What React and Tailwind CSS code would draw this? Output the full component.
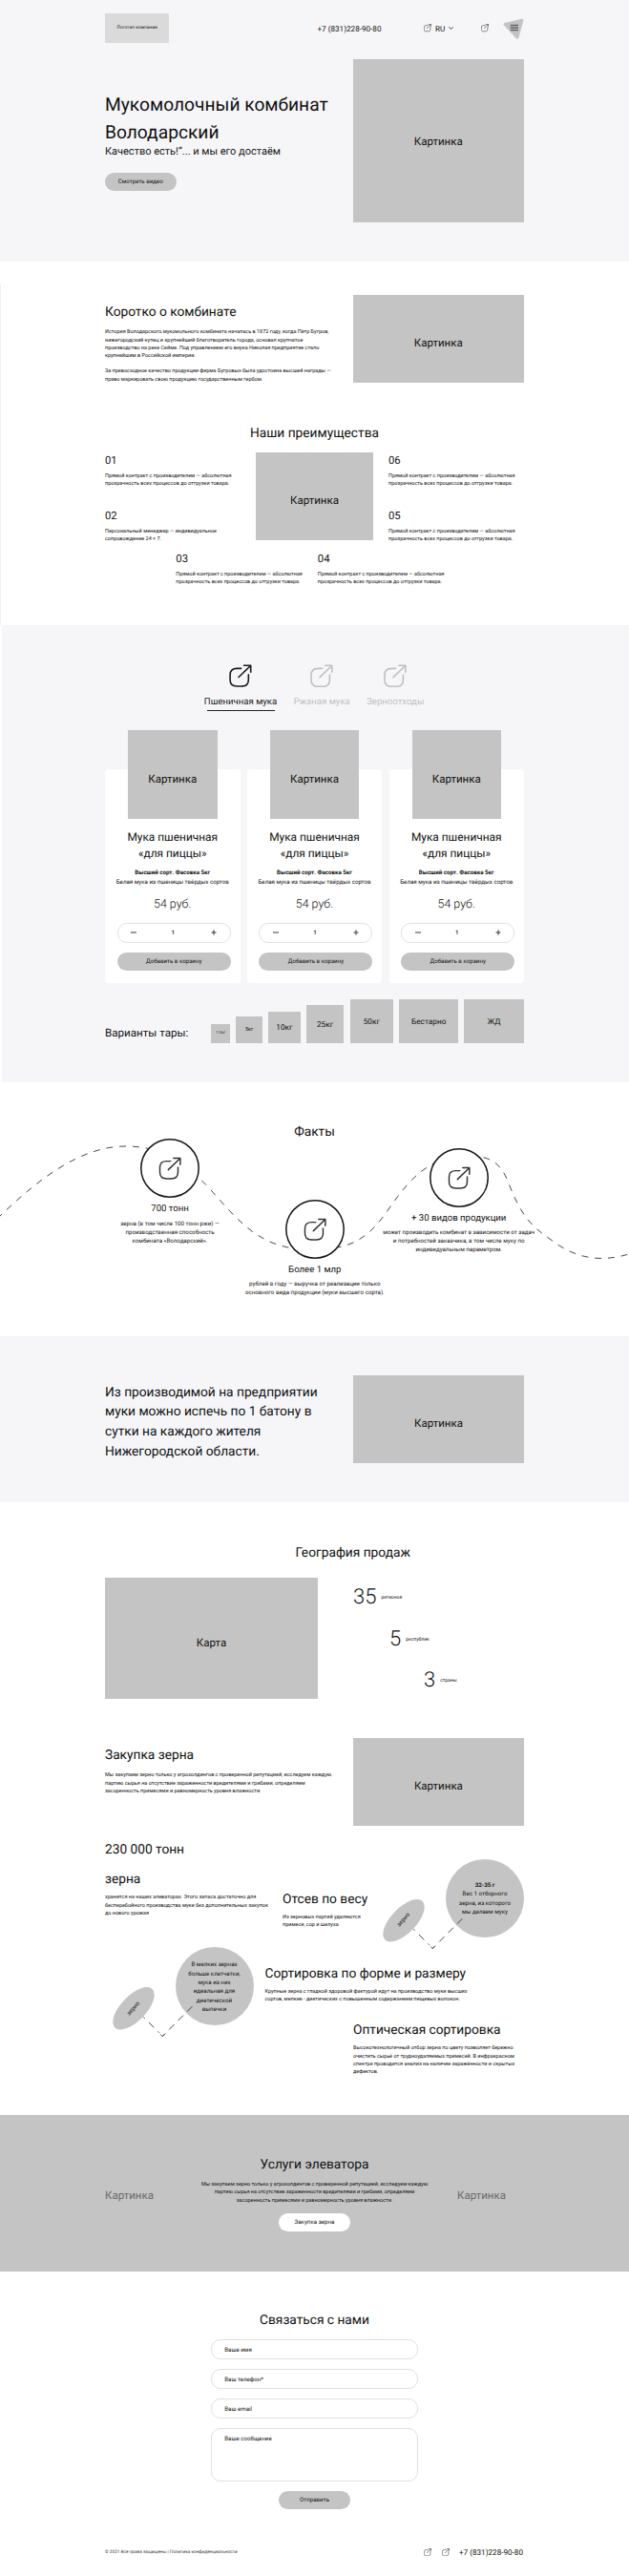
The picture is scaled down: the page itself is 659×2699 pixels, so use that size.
import React from "react";

function LinkIcon({ className, stroke = 1.5 }) {
  return (
    <svg viewBox="0 0 24 24" className={className} fill="none" stroke="currentColor" strokeWidth={stroke} strokeLinecap="round" strokeLinejoin="round">
      <path d="M12.6 4.4H8.2C3 4.4 1 6.4 1 11.2v5.2c0 4.8 2 6.8 7.200 6.800h5c5.200 0 7.200-2 7.200-6.800v-5.400" />
      <path d="M10 13.600 22.600 1.500M15.600 1.300h7.200v6.900" />
    </svg>
  );
}

function Picture({ className, children = "Картинка", shift = true }) {
  return (
    <div className={`flex shrink-0 items-center justify-center bg-[#c4c4c4] ${className}`}>
      <span className={`text-[11.5px] leading-4 ${shift ? "pt-[8.500px]" : ""}`}>{children}</span>
    </div>
  );
}

function Lines({ items, className = "" }) {
  return (
    <div className={className}>
      {items.map((line, i) => (
        <p key={i}>{line}</p>
      ))}
    </div>
  );
}

const body = "text-[5.49px] leading-[8.24px]";
const h2 = "text-[13.73px] leading-5";
const direct = ["Прямой контракт с производителем — абсолютная", "прозрачность всех процессов до отгрузки товара."];
const purchase = [
  "Мы закупаем зерно только у агрохолдингов с проверенной репутацией, исследуем каждую",
  "партию сырья на отсутствие зараженности вредителями и грибами, определяем",
  "засоренность примесями и равномерность уровня влажности.",
];

function Advantage({ n, items, className = "" }) {
  return (
    <div className={className}>
      <p className="text-[11.300px] leading-[14px]">{n}</p>
      <Lines items={items} className={`mt-[5px] ${body}`} />
    </div>
  );
}

function Hero() {
  return (
    <section className="h-[274px] shrink-0 bg-[#f6f6f9] px-[110px] pt-[14px]">
      <header className="flex h-[31px] items-center">
        <div className="flex h-[31px] w-[67px] items-center justify-center bg-[#dadada] text-[4.800px]">Логотип компании</div>
        <span className="ml-[155.500px] w-[111.500px] pt-[1px] text-[8.150px]">+7 (831)228-90-80</span>
        <LinkIcon className="h-[8.300px] w-[8px]" />
        <span className="ml-[4px] w-[13.500px] pt-[1px] text-[8.150px]">RU</span>
        <svg viewBox="0 0 5 3" className="h-[3px] w-[5px]" fill="none" stroke="#222" strokeWidth="0.9">
          <path d="M.4.4 2.500 2.400 4.600.4" />
        </svg>
        <LinkIcon className="ml-[29px] h-[8.300px] w-[8px]" />
        <svg viewBox="0 0 22 22" className="ml-[15.500px] h-[22px] w-[22px] shrink-0">
          <path d="M2 6.500 20 2.200 15 20.200Z" fill="#c4c4c4" stroke="#c4c4c4" strokeWidth="3" strokeLinejoin="round" />
          <path d="M7.700 7.500h8.300M7.700 10h8.300M7.700 12.500h8.300" stroke="#666" strokeWidth="1.500" />
        </svg>
      </header>
      <div className="mt-[17px] flex">
        <div className="w-[259.500px] pt-[34px]">
          <Lines items={["Мукомолочный комбинат", "Володарский"]} className="text-[19.200px] leading-[28.800px]" />
          <p className="-mt-[3px] text-[11px] leading-4">Качество есть!”... и мы его достаём</p>
          <div className="mt-[14.500px] flex h-[18.700px] w-[74.500px] items-center justify-center rounded-full bg-[#c4c4c4] text-[6.180px]">Смотреть видео</div>
        </div>
        <Picture shift={false} className="h-[171px] w-[179.500px]" />
      </div>
    </section>
  );
}

function About() {
  return (
    <section className="h-[381px] shrink-0 pt-[24px]">
      <div className="h-[357px] border-l border-[#f0f0f0] pr-[110px] pl-[109px] pt-[10.500px]">
        <div className="flex h-[92.500px]">
          <div className="w-[259.500px] pt-[8.800px]">
            <h2 className={h2}>Коротко о комбинате</h2>
            <Lines
              className={`mt-[7px] ${body}`}
              items={[
                "История Володарского мукомольного комбината началась в 1872 году, когда Пётр Бугров,",
                "нижегородский купец и крупнейший благотворитель города, основал крупчатое",
                "производство на реке Сейме. Под управлением его внука Николая предприятие стало",
                "крупнейшим в Российской империи.",
              ]}
            />
            <Lines
              className={`mt-[8.240px] ${body}`}
              items={["За превосходное качество продукции фирма Бугровых была удостоена высшей награды —", "право маркировать свою продукцию государственным гербом."]}
            />
          </div>
          <Picture className="h-[92.500px] w-[179.500px]" />
        </div>
        <h2 className={`mt-[43px] text-center ${h2}`}>Наши преимущества</h2>
        <div className="mt-[10px] flex h-[92px]">
          <div className="w-[158px] pt-[1.800px]">
            <Advantage n="01" items={direct} />
            <Advantage n="02" items={["Персональный менеджер — индивидуальное", "сопровождение 24 × 7."]} className="mt-[22.500px]" />
          </div>
          <Picture className="h-[92px] w-[123px]" />
          <div className="pt-[1.800px] pl-[16px]">
            <Advantage n="06" items={direct} />
            <Advantage n="05" items={direct} className="mt-[22.500px]" />
          </div>
        </div>
        <div className="mt-[13px] flex pl-[74.300px]">
          <Advantage n="03" items={direct} className="w-[148.500px]" />
          <Advantage n="04" items={direct} />
        </div>
      </div>
    </section>
  );
}

function Card() {
  return (
    <div className="flex h-[224px] w-[141.500px] flex-col items-center rounded-[4px] bg-white">
      <Picture className="-mt-[41px] h-[93px] w-[93.500px]" />
      <Lines items={["Мука пшеничная", "«для пиццы»"]} className="mt-[10.500px] text-center text-[11.900px] leading-[17.800px]" />
      <div className="mt-[6.400px] text-center text-[6.180px] leading-[9.300px]">
        <p className="font-bold">Высший сорт. Фасовка 5кг</p>
        <p>Белая мука из пшеницы твёрдых сортов</p>
      </div>
      <p className="mt-[10.800px] text-[12.400px] font-light leading-4">54 руб.</p>
      <div className="mt-[11px] ml-[12.700px] flex h-[20.700px] w-[119px] items-center justify-between self-start rounded-[10px] border border-[#e2e2e2] px-[13.500px] text-[6.180px]">
        <svg viewBox="0 0 6 6" className="h-[6px] w-[6px]"><path d="M0 3h6" stroke="#222" strokeWidth=".9" /></svg>
        <span className="pr-[2px] font-medium">1</span>
        <svg viewBox="0 0 6 6" className="h-[6px] w-[6px]"><path d="M.5 3h5M3 .3v5.400" stroke="#222" strokeWidth=".9" /></svg>
      </div>
      <div className="mt-[10.300px] ml-[12.700px] flex h-[18.700px] w-[119px] items-center justify-center self-start rounded-full bg-[#c4c4c4] text-[6.180px]">Добавить в корзину</div>
    </div>
  );
}

function Products() {
  return (
    <section className="h-[479px] shrink-0 bg-white pl-[2px]">
      <div className="h-full bg-[#f6f6f9] pr-[110px] pl-[108px] pt-[41px]">
        <div className="flex h-[48.500px] gap-[18px] pl-[104px] text-[9.600px] leading-3 text-[#c0c0c0]">
          <div className="flex w-[76px] flex-col items-center whitespace-nowrap text-[#1a1a1a]">
            <LinkIcon className="h-6 w-6" stroke={1.6} />
            <span className="mt-[10.200px]">Пшеничная мука</span>
            <span className="mt-[1.500px] h-px w-[71px] bg-[#222]" />
          </div>
          <div className="flex w-[58.500px] flex-col items-center whitespace-nowrap">
            <LinkIcon className="h-6 w-6" stroke={1.6} />
            <span className="mt-[10.200px]">Ржаная мука</span>
          </div>
          <div className="flex w-[59.500px] flex-col items-center whitespace-nowrap">
            <LinkIcon className="h-6 w-6" stroke={1.6} />
            <span className="mt-[10.200px]">Зерноотходы</span>
          </div>
        </div>
        <div className="mt-[61.500px] flex justify-between">
          <Card />
          <Card />
          <Card />
        </div>
        <div className="mt-[17.300px] flex h-[45.300px] items-end justify-between text-[8.240px]">
          <span className="mb-[2.600px] w-[105px] text-[11.600px] leading-4">Варианты тары:</span>
          <div className="flex h-5 w-5 items-center justify-center bg-[#c4c4c4] pt-px text-[4.100px]">1-2кг</div>
          <div className="flex h-[27.500px] w-[27.500px] items-center justify-center bg-[#c4c4c4] pt-px text-[5.490px]">5кг</div>
          <div className="flex h-[33px] w-[33.500px] items-center justify-center bg-[#c4c4c4] pt-[1.500px]">10кг</div>
          <div className="flex h-[39.300px] w-[39.500px] items-center justify-center bg-[#c4c4c4] pt-[1.500px]">25кг</div>
          <div className="flex h-[45.300px] w-[45.500px] items-center justify-center bg-[#c4c4c4] pt-[1.500px]">50кг</div>
          <div className="flex h-[45.300px] w-[62px] items-center justify-center bg-[#c4c4c4] pt-[1.500px]">Бестарно</div>
          <div className="flex h-[45.300px] w-[62.500px] items-center justify-center bg-[#c4c4c4] pt-[1.500px]">ЖД</div>
        </div>
      </div>
    </section>
  );
}

function Fact({ className, title, items }) {
  return (
    <div className={`absolute flex w-[180px] flex-col items-center text-center ${className}`}>
      <svg viewBox="0 0 62 62" className="h-[62px] w-[62px] text-[#333]">
        <circle cx="31" cy="31" r="30.200" fill="#fff" stroke="#161616" strokeWidth="1.500" />
        <LinkIconPaths />
      </svg>
      <p className="mt-[6px] text-[9.600px] leading-3">{title}</p>
      <Lines items={items} className="mt-[4.200px] text-[6.180px] leading-[9.300px]" />
    </div>
  );
}

function LinkIconPaths() {
  return (
    <g transform="translate(19.500 19.300) scale(.98)" fill="none" stroke="currentColor" strokeWidth="1.500" strokeLinecap="round" strokeLinejoin="round">
      <path d="M12.600 4.400H8.200C3 4.400 1 6.400 1 11.200v5.200c0 4.800 2 6.800 7.200 6.800h5c5.200 0 7.200-2 7.200-6.800v-5.400" />
      <path d="M10 13.600 22.600 1.500M15.600 1.300h7.200v6.900" />
    </g>
  );
}

function Facts() {
  return (
    <section className="relative h-[266px] shrink-0 pt-[41.500px]">
      <h2 className={`text-center ${h2}`}>Факты</h2>
      <svg viewBox="0 0 659 266" className="absolute inset-0 h-[266px] w-[659px]" fill="none" stroke="#333" strokeWidth="0.9" strokeDasharray="6.900 6.900">
        <path d="M-3 143C38 103 84 67 131 67C166 67 190 79 222 114C252 148 275 175 323 175C364 176 384 167 407 133C428 103 448 78 488 77C512 77 524 82 533 106C545 137 555 150 576 164C604 186 631 189 662 179" />
      </svg>
      <Fact className="top-[59.400px] left-[88px]" title="700 тонн" items={["зерна (в том числе 100 тонн ржи) —", "производственная способность", "комбината «Володарский»."]} />
      <Fact className="top-[122.600px] left-[239.800px]" title="Более 1 млр" items={["рублей в году — выручка от реализации только", "основного вида продукции (муки высшего сорта)."]} />
      <Fact className="top-[68.500px] left-[390.700px]" title="+ 30 видов продукции" items={["может производить комбинат в зависимости от задач", "и потребностей заказчика, в том числе муку по", "индивидуальным параметром."]} />
    </section>
  );
}

function Grain({ className = "", children }) {
  return (
    <div className={`relative h-[96px] w-[148px] shrink-0 ${className}`}>
      <svg viewBox="0 0 148 96" className="absolute inset-0 h-[96px] w-[148px]">
        <circle cx="107" cy="41" r="41" fill="#c4c4c4" />
        <ellipse cx="22" cy="64.300" rx="28.100" ry="13.200" transform="rotate(-46 22 64.300)" fill="#c4c4c4" />
        <g fill="none" stroke="#333" strokeWidth="0.9">
          <path d="M83.300 62.300 52.300 93.400" strokeDasharray="7.500 5.800" />
          <path d="M32.300 73.300 52.300 93.400" strokeDasharray="2 6 7.500 5.800" />
          <path d="M50.300 91.800 52.300 93.600 54.300 91.800" />
        </g>
      </svg>
      <div className="absolute top-0 left-[66px] flex h-[84px] w-[82px] flex-col items-center justify-center text-center text-[6.180px] leading-[9.300px]">{children}</div>
      <span className="absolute top-[59.600px] left-[12px] w-[20px] -rotate-50 text-center text-[6.180px] leading-[9.300px]">зерно</span>
    </div>
  );
}

function Stat({ value, label, className }) {
  return (
    <div className={`flex h-6 items-center ${className}`}>
      <span className="text-[22px] font-light leading-6">{value}</span>
      <span className="ml-[5px] text-[5px] leading-6">{label}</span>
    </div>
  );
}

function Sales() {
  return (
    <section className="h-[641.500px] shrink-0 px-[110px] pt-[42.500px]">
      <h2 className={`pl-[199.500px] ${h2}`}>География продаж</h2>
      <div className="mt-[16.300px] flex h-[127px]">
        <Picture className="h-[127px] w-[223px]">Карта</Picture>
        <div className="pl-[37px] pt-[9.600px]">
          <Stat value="35" label="регионов" className="" />
          <Stat value="5" label="республик" className="mt-[19.200px] pl-[38px]" />
          <Stat value="3" label="страны" className="mt-[19.200px] pl-[74px]" />
        </div>
      </div>
      <div className="mt-[41.200px] flex h-[92.500px]">
        <div className="w-[259.800px] pt-[8.200px]">
          <h2 className={h2}>Закупка зерна</h2>
          <Lines items={purchase} className={`mt-[7.200px] ${body}`} />
        </div>
        <Picture className="h-[92.500px] w-[179.200px]" />
      </div>
      <div className="flex h-[126.800px]">
        <div className="w-[186px] pt-[9.800px]">
          <Lines items={["230 000 тонн", "зерна"]} className="text-[13.730px] leading-[31px]" />
          <Lines
            className={`-mt-[.8px] ${body}`}
            items={["хранится на наших элеваторах. Этого запаса достаточно для", "бесперебойного производства муки без дополнительных закупок", "до нового урожая"]}
          />
        </div>
        <div className="w-[105px] pt-[66.500px]">
          <h2 className={h2}>Отсев по весу</h2>
          <Lines className={`mt-[5.100px] ${body}`} items={["Из зерновых партий удаляются", "примеси, сор и шелуха"]} />
        </div>
        <Grain className="mt-[34.200px]">
          <p className="font-bold">32-35 г</p>
          <p>Вес 1 отборного</p>
          <p>зерна, из которого</p>
          <p>мы делаем муку</p>
        </Grain>
      </div>
      <div className="flex pl-[7.500px]">
        <Grain>
          <p>В мелких зернах</p>
          <p>больше клетчатки,</p>
          <p>мука из них</p>
          <p>идеальная для</p>
          <p>диетической</p>
          <p>выпечки</p>
        </Grain>
        <div className="pl-[12px] pt-[17.700px]">
          <h2 className={h2}>Сортировка по форме и размеру</h2>
          <Lines className={`mt-[4.900px] ${body}`} items={["Крупные зерна с гладкой здоровой фактурой идут на производство муки высших", "сортов, мелкие - диетических с повышенным содержанием пищевых волокон."]} />
          <div className="mt-[17.900px] ml-[92.500px]">
            <h2 className={h2}>Оптическая сортировка</h2>
            <Lines
              className={`mt-[5.200px] ${body}`}
              items={["Высокотехнологичный отбор зерна по цвету позволяет бережно", "очистить сырьё от трудноудаляемых примесей. В инфракрасном", "спектре проводится анализ на наличие заражённости и скрытых", "дефектов."]}
            />
          </div>
        </div>
      </div>
    </section>
  );
}

function Field({ children, className = "h-[20.700px]" }) {
  return <div className={`w-[216.500px] rounded-[10px] border border-[#e0e0e0] px-[13px] pt-[5.600px] text-[6.180px] leading-[9.300px] ${className}`}>{children}</div>;
}

export default function App() {
  return (
    <div className="flex h-[2699px] w-[659px] flex-col overflow-hidden bg-white font-['Roboto',sans-serif] whitespace-nowrap text-[#111] [text-rendering:geometricPrecision]">
      <Hero />
      <About />
      <Products />
      <Facts />
      <section className="flex h-[174px] shrink-0 bg-[#f6f6f9] px-[110px] pt-[40.500px]">
        <Lines
          className="w-[260px] pt-[8.300px] text-[13.730px] leading-[20.600px]"
          items={["Из производимой на предприятии", "муки можно испечь по 1 батону в", "сутки на каждого жителя", "Нижегородской области."]}
        />
        <Picture className="h-[92.500px] w-[179px]" />
      </section>
      <Sales />
      <section className="flex h-[164px] shrink-0 bg-[#c4c4c4] px-[110px]">
        <p className="w-[100.500px] pt-[76px] text-[11.500px] leading-4 text-[#6a6a6a]">Картинка</p>
        <div className="flex w-[238px] flex-col items-center pt-[42.300px]">
          <h2 className={h2}>Услуги элеватора</h2>
          <Lines items={purchase} className={`mt-[7.300px] text-center ${body}`} />
          <div className="mt-[9.500px] flex h-[18.700px] w-[74.500px] items-center justify-center rounded-full bg-white text-[6.180px]">Закупка зерна</div>
        </div>
        <p className="pt-[76px] pl-[30.500px] text-[11.500px] leading-4 text-[#6a6a6a]">Картинка</p>
      </section>
      <section className="flex shrink-0 flex-col items-center pt-[41.700px]">
        <h2 className={h2}>Связаться с нами</h2>
        <div className="mt-[10px] flex flex-col gap-[10.300px]">
          <Field>Ваше имя</Field>
          <Field>Ваш телефон*</Field>
          <Field>Ваш email</Field>
          <Field className="h-[55.800px]">Ваше сообщение</Field>
        </div>
        <div className="mt-[10.300px] flex h-[18.700px] w-[74.500px] items-center justify-center rounded-full bg-[#c4c4c4] text-[6.180px]">Отправить</div>
      </section>
      <footer className="mt-[39px] flex h-3 shrink-0 items-center px-[110px]">
        <span className="w-[334px] pt-px text-[4.720px] text-[#333]">© 2021 Все права защищены | Политика конфиденциальности</span>
        <LinkIcon className="h-[8.300px] w-[8px]" />
        <LinkIcon className="ml-[11px] h-[8.300px] w-[8px]" />
        <span className="ml-[10px] pt-px text-[8.150px]">+7 (831)228-90-80</span>
      </footer>
    </div>
  );
}
